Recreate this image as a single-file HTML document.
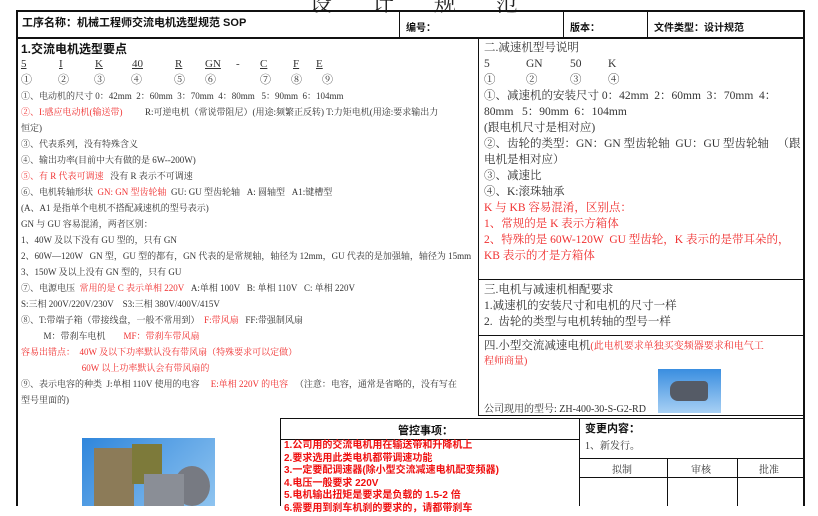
<!DOCTYPE html>
<html><head><meta charset="utf-8"><style>
body{margin:0;width:818px;height:506px;overflow:hidden;background:#fff;position:relative;font-family:"Liberation Serif","Noto Serif CJK SC",serif;color:#333}
.a{position:absolute;white-space:nowrap}
.l{position:absolute;background:#111}
.s{font-size:9px;line-height:16px}
.r{color:#f03030}
.rt{font-size:11.5px;line-height:16px;color:#333}
.b{font-weight:bold;font-family:"Liberation Sans","Noto Sans CJK SC",sans-serif;color:#111}
u{text-decoration:underline}
</style></head><body>
<div class="a" style="left:310px;top:-13px;font-size:22px;letter-spacing:40px;font-family:'Noto Serif CJK SC',serif;color:#222">设计规范</div>
<!-- outer lines -->
<div class="l" style="left:16px;top:10px;width:789px;height:2px"></div>
<div class="l" style="left:16px;top:10px;width:2px;height:496px"></div>
<div class="l" style="left:803px;top:10px;width:2px;height:496px"></div>
<div class="l" style="left:16px;top:37px;width:789px;height:2px"></div>
<div class="l" style="left:399px;top:10px;width:1px;height:28px"></div>
<div class="l" style="left:563px;top:10px;width:1px;height:28px"></div>
<div class="l" style="left:647px;top:10px;width:1px;height:28px"></div>
<div class="l" style="left:478px;top:38px;width:1px;height:378px"></div>
<div class="l" style="left:478px;top:279px;width:326px;height:1px"></div>
<div class="l" style="left:478px;top:335px;width:326px;height:1px"></div>
<div class="l" style="left:478px;top:415px;width:326px;height:1px"></div>
<!-- header -->
<div class="a b" style="left:22px;top:14px;font-size:11px">工序名称：机械工程师交流电机选型规范 SOP</div>
<div class="a b" style="left:406px;top:19px;font-size:10px">编号：</div>
<div class="a b" style="left:570px;top:19px;font-size:10px">版本：</div>
<div class="a b" style="left:654px;top:19px;font-size:10px">文件类型：设计规范</div>
<!-- left column -->
<div class="a b" style="left:21px;top:40px;font-size:12px">1.交流电机选型要点</div>
<div class="a" style="left:21px;top:56px;font-size:11px;line-height:16px">
<span class="a" style="left:0"><u>5</u></span><span class="a" style="left:38px"><u>I</u></span><span class="a" style="left:74px"><u>K</u></span><span class="a" style="left:111px"><u>40</u></span><span class="a" style="left:154px"><u>R</u></span><span class="a" style="left:184px"><u>GN</u></span><span class="a" style="left:215px">-</span><span class="a" style="left:239px"><u>C</u></span><span class="a" style="left:272px"><u>F</u></span><span class="a" style="left:295px"><u>E</u></span></div>
<div class="a" style="left:21px;top:72px;font-size:11px;line-height:16px">
<span class="a" style="left:0">①</span><span class="a" style="left:37px">②</span><span class="a" style="left:73px">③</span><span class="a" style="left:110px">④</span><span class="a" style="left:153px">⑤</span><span class="a" style="left:184px">⑥</span><span class="a" style="left:239px">⑦</span><span class="a" style="left:270px">⑧</span><span class="a" style="left:301px">⑨</span></div>
<div class="a s" style="left:21px;top:88px">
<div>①、电动机的尺寸 0：42mm &nbsp;2：60mm &nbsp;3：70mm &nbsp;4：80mm &nbsp;&nbsp;5：90mm &nbsp;6：104mm</div>
<div><span class="r">②、I:感应电动机(输送带)</span> &nbsp;&nbsp;&nbsp;&nbsp;&nbsp;&nbsp;&nbsp;&nbsp;&nbsp;R:可逆电机（常说带阻尼）(用途:频繁正反转) T:力矩电机(用途:要求输出力</div>
<div>恒定)</div>
<div>③、代表系列，没有特殊含义</div>
<div>④、输出功率(目前中大有做的是 6W--200W)</div>
<div><span class="r">⑤、有 R 代表可调速</span> &nbsp;&nbsp;没有 R 表示不可调速</div>
<div>⑥、电机转轴形状 &nbsp;<span class="r">GN: GN 型齿轮轴</span> &nbsp;GU: GU 型齿轮轴 &nbsp;&nbsp;A: 圆轴型 &nbsp;&nbsp;A1:键槽型</div>
<div>(A、A1 是指单个电机不搭配减速机的型号表示)</div>
<div>GN 与 GU 容易混淆，两者区别：</div>
<div>1、40W 及以下没有 GU 型的，只有 GN</div>
<div>2、60W—120W &nbsp;&nbsp;GN 型，GU 型的都有，GN 代表的是常规轴，轴径为 12mm，GU 代表的是加强轴，轴径为 15mm</div>
<div>3、150W 及以上没有 GN 型的，只有 GU</div>
<div>⑦、电源电压 &nbsp;<span class="r">常用的是 C 表示单相 220V</span> &nbsp;&nbsp;A:单相 100V &nbsp;&nbsp;B: 单相 110V &nbsp;&nbsp;C: 单相 220V</div>
<div>S:三相 200V/220V/230V &nbsp;&nbsp;&nbsp;S3:三相 380V/400V/415V</div>
<div>⑧、T:带端子箱（带接线盘，一般不常用到） &nbsp;<span class="r">F:带风扇</span> &nbsp;&nbsp;FF:带强制风扇</div>
<div>&nbsp;&nbsp;&nbsp;&nbsp;&nbsp;&nbsp;&nbsp;&nbsp;&nbsp;&nbsp;M：带刹车电机 &nbsp;&nbsp;&nbsp;&nbsp;&nbsp;&nbsp;&nbsp;<span class="r">MF：带刹车带风扇</span></div>
<div class="r">容易出错点： &nbsp;40W 及以下功率默认没有带风扇（特殊要求可以定做）</div>
<div class="r">&nbsp;&nbsp;&nbsp;&nbsp;&nbsp;&nbsp;&nbsp;&nbsp;&nbsp;&nbsp;&nbsp;&nbsp;&nbsp;&nbsp;&nbsp;&nbsp;&nbsp;&nbsp;&nbsp;&nbsp;&nbsp;&nbsp;&nbsp;&nbsp;&nbsp;&nbsp;&nbsp;60W 以上功率默认会有带风扇的</div>
<div>⑨、表示电容的种类 &nbsp;J:单相 110V 使用的电容 &nbsp;&nbsp;&nbsp;&nbsp;<span class="r">E:单相 220V 的电容</span> &nbsp;&nbsp;（注意：电容，通常是省略的，没有写在</div>
<div>型号里面的)</div>
</div>
<!-- right section 二 -->
<div class="a rt" style="left:484px;top:40px">
<div>二.减速机型号说明</div>
<div style="position:relative;height:16px"><span class="a" style="left:0">5</span><span class="a" style="left:42px">GN</span><span class="a" style="left:86px">50</span><span class="a" style="left:124px">K</span></div>
<div style="position:relative;height:16px"><span class="a" style="left:0">①</span><span class="a" style="left:42px">②</span><span class="a" style="left:86px">③</span><span class="a" style="left:124px">④</span></div>
<div>①、减速机的安装尺寸 0：42mm &nbsp;2：60mm &nbsp;3：70mm &nbsp;4：</div>
<div>80mm &nbsp;&nbsp;5：90mm &nbsp;6：104mm</div>
<div>(跟电机尺寸是相对应)</div>
<div>②、齿轮的类型：GN：GN 型齿轮轴 &nbsp;GU：GU 型齿轮轴 &nbsp;&nbsp;（跟</div>
<div>电机是相对应）</div>
<div>③、减速比</div>
<div>④、K:滚珠轴承</div>
<div class="r">K 与 KB 容易混淆，区别点：</div>
<div class="r">1、常规的是 K 表示方箱体</div>
<div class="r">2、特殊的是 60W-120W &nbsp;GU 型齿轮，K 表示的是带耳朵的，</div>
<div class="r">KB 表示的才是方箱体</div>
</div>
<div class="a rt" style="left:484px;top:282px">
<div>三.电机与减速机相配要求</div>
<div>1.减速机的安装尺寸和电机的尺寸一样</div>
<div>2. &nbsp;齿轮的类型与电机转轴的型号一样</div>
</div>
<div class="a rt" style="left:484px;top:338px">四.小型交流减速电机<span class="r" style="font-size:10px">(此电机要求单独买变频器要求和电气工</span></div>
<div class="a r" style="left:484px;top:354px;font-size:10px;line-height:16px">程师商量)</div>
<div class="a" style="left:484px;top:400px;font-size:10px">公司现用的型号: ZH-400-30-S-G2-RD</div>
<div class="a" style="left:658px;top:369px;width:63px;height:44px;background:linear-gradient(#3a8ee0,#a8d0f4)">
<div style="position:absolute;left:12px;top:12px;width:38px;height:20px;background:#555b66;border-radius:8px 4px 4px 8px"></div></div>
<!-- bottom -->
<div class="l" style="left:280px;top:418px;width:525px;height:1px"></div>
<div class="l" style="left:280px;top:418px;width:1px;height:88px"></div>
<div class="l" style="left:280px;top:439px;width:299px;height:1px"></div>
<div class="l" style="left:579px;top:418px;width:1px;height:88px"></div>
<div class="l" style="left:579px;top:458px;width:226px;height:1px"></div>
<div class="l" style="left:579px;top:477px;width:226px;height:1px"></div>
<div class="l" style="left:667px;top:458px;width:1px;height:48px"></div>
<div class="l" style="left:737px;top:458px;width:1px;height:48px"></div>
<div class="a b" style="left:398px;top:422px;font-size:11px">管控事项：</div>
<div class="a b" style="left:585px;top:420px;font-size:11px">变更内容：</div>
<div class="a" style="left:585px;top:437px;font-size:10px">1、新发行。</div>
<div class="a" style="left:612px;top:461px;font-size:10px">拟制</div>
<div class="a" style="left:691px;top:461px;font-size:10px">审核</div>
<div class="a" style="left:759px;top:461px;font-size:10px">批准</div>
<div class="a b r" style="left:284px;top:440px;font-size:10px;line-height:12.6px;color:#f01010">
<div>1.公司用的交流电机用在输送带和升降机上</div>
<div>2.要求选用此类电机都带调速功能</div>
<div>3.一定要配调速器(除小型交流减速电机配变频器)</div>
<div>4.电压一般要求 220V</div>
<div>5.电机输出扭矩是要求是负载的 1.5-2 倍</div>
<div>6.需要用到刹车机刹的要求的，请都带刹车</div>
</div>
<div class="a" style="left:82px;top:438px;width:133px;height:68px;background:linear-gradient(135deg,#2f86dc,#8fc4f0)">
<div style="position:absolute;left:12px;top:10px;width:40px;height:58px;background:#8c7b58"></div>
<div style="position:absolute;left:50px;top:6px;width:30px;height:40px;background:#7d7a3a"></div>
<div style="position:absolute;left:92px;top:28px;width:36px;height:40px;background:#777a82;border-radius:50%"></div>
<div style="position:absolute;left:62px;top:36px;width:40px;height:32px;background:#8a8e96"></div>
</div>
</body></html>
